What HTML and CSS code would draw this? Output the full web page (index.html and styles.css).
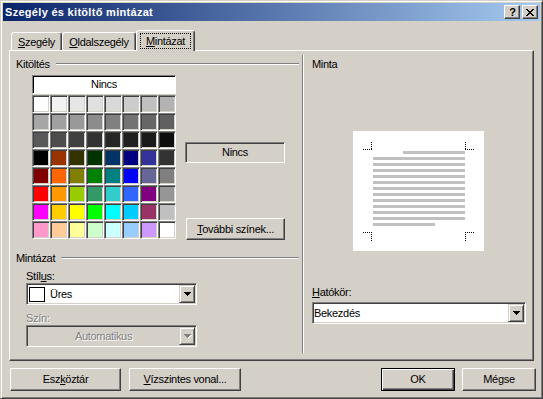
FILE: index.html
```html
<!DOCTYPE html>
<html lang="hu">
<head>
<meta charset="utf-8">
<title>Szegély és kitöltő mintázat</title>
<link rel="stylesheet" href="styles.css">
</head>
<body>
<div class="window">
  <div class="titlebar">
    <span class="title">Szegély és kitöltő mintázat</span>
    <div class="caption-btns">
      <span class="cbtn help">?</span>
      <span class="cbtn close"><svg width="8" height="7" viewBox="0 0 8 7" shape-rendering="crispEdges"><path d="M0 0h2v1H0zM6 0h2v1H6zM1 1h2v1H1zM5 1h2v1H5zM2 2h4v1H2zM3 3h2v1H3zM2 4h4v1H2zM1 5h2v1H1zM5 5h2v1H5zM0 6h2v1H0zM6 6h2v1H6z"/></svg></span>
    </div>
  </div>

  <div class="tabs">
    <div class="tab t1"><u>S</u>zegély</div>
    <div class="tab t2"><u>O</u>ldalszegély</div>
    <div class="tab active"><span class="focus"><u>M</u>intázat</span></div>
  </div>

  <div class="panel">
    <div class="col-left">
      <div class="group-head"><span>Kitöltés</span><i class="etch"></i></div>
      <div class="fill-row">
        <div class="palette">
          <div class="none-cell">Nincs</div>
          <div class="swatches">
            <div class="sw" style="background:#ffffff"></div><div class="sw" style="background:#f2f2f2"></div><div class="sw" style="background:#e6e6e6"></div><div class="sw" style="background:#e0e0e0"></div><div class="sw" style="background:#d9d9d9"></div><div class="sw" style="background:#cccccc"></div><div class="sw" style="background:#c0c0c0"></div><div class="sw" style="background:#b3b3b3"></div>
            <div class="sw" style="background:#a6a6a6"></div><div class="sw" style="background:#a0a0a0"></div><div class="sw" style="background:#999999"></div><div class="sw" style="background:#8c8c8c"></div><div class="sw" style="background:#808080"></div><div class="sw" style="background:#737373"></div><div class="sw" style="background:#666666"></div><div class="sw" style="background:#606060"></div>
            <div class="sw" style="background:#595959"></div><div class="sw" style="background:#4d4d4d"></div><div class="sw" style="background:#404040"></div><div class="sw" style="background:#333333"></div><div class="sw" style="background:#262626"></div><div class="sw" style="background:#202020"></div><div class="sw" style="background:#1a1a1a"></div><div class="sw" style="background:#0d0d0d"></div>
            <div class="sw" style="background:#000000"></div><div class="sw" style="background:#993300"></div><div class="sw" style="background:#333300"></div><div class="sw" style="background:#003300"></div><div class="sw" style="background:#003366"></div><div class="sw" style="background:#000080"></div><div class="sw" style="background:#333399"></div><div class="sw" style="background:#333333"></div>
            <div class="sw" style="background:#800000"></div><div class="sw" style="background:#ff6600"></div><div class="sw" style="background:#808000"></div><div class="sw" style="background:#008000"></div><div class="sw" style="background:#008080"></div><div class="sw" style="background:#0000ff"></div><div class="sw" style="background:#666699"></div><div class="sw" style="background:#808080"></div>
            <div class="sw" style="background:#ff0000"></div><div class="sw" style="background:#ff9900"></div><div class="sw" style="background:#99cc00"></div><div class="sw" style="background:#339966"></div><div class="sw" style="background:#33cccc"></div><div class="sw" style="background:#3366ff"></div><div class="sw" style="background:#800080"></div><div class="sw" style="background:#969696"></div>
            <div class="sw" style="background:#ff00ff"></div><div class="sw" style="background:#ffcc00"></div><div class="sw" style="background:#ffff00"></div><div class="sw" style="background:#00ff00"></div><div class="sw" style="background:#00ffff"></div><div class="sw" style="background:#00ccff"></div><div class="sw" style="background:#993366"></div><div class="sw" style="background:#c0c0c0"></div>
            <div class="sw" style="background:#ff99cc"></div><div class="sw" style="background:#ffcc99"></div><div class="sw" style="background:#ffff99"></div><div class="sw" style="background:#ccffcc"></div><div class="sw" style="background:#ccffff"></div><div class="sw" style="background:#99ccff"></div><div class="sw" style="background:#cc99ff"></div><div class="sw" style="background:#ffffff"></div>
          </div>
        </div>
        <div class="side">
          <div class="current">Nincs</div>
          <div class="btn more"><span><u>T</u>ovábbi színek...</span></div>
        </div>
      </div>

      <div class="group-head g2"><span>Mintázat</span><i class="etch"></i></div>
      <div class="label l-stilus">Stíl<u>u</u>s:</div>
      <div class="combo narrow">
        <span class="pat-swatch"></span>
        <span class="combo-text">Üres</span>
        <span class="drop"><svg width="7" height="4" viewBox="0 0 7 4" shape-rendering="crispEdges"><path d="M0 0h7v1H0zM1 1h5v1H1zM2 2h3v1H2zM3 3h1v1H3z"/></svg></span>
      </div>
      <div class="label l-szin disabled-text">Szín:</div>
      <div class="combo narrow disabled">
        <span class="combo-text centered disabled-text">Automatikus</span>
        <span class="drop"><svg class="dis-arrow" width="7" height="4" viewBox="0 0 7 4" shape-rendering="crispEdges"><path d="M0 0h7v1H0zM1 1h5v1H1zM2 2h3v1H2zM3 3h1v1H3z"/></svg></span>
      </div>
    </div>

    <div class="vsep"></div>

    <div class="col-right">
      <div class="section-label">Minta</div>
      <div class="preview">
        <svg width="131" height="120" viewBox="0 0 131 120" shape-rendering="crispEdges">
          <g fill="#c0c0c0">
            <rect x="50" y="20" width="62" height="3"/>
            <rect x="20" y="26" width="92" height="3"/>
            <rect x="20" y="32" width="92" height="3"/>
            <rect x="20" y="38" width="92" height="3"/>
            <rect x="20" y="44" width="92" height="3"/>
            <rect x="20" y="50" width="92" height="3"/>
            <rect x="20" y="56" width="92" height="3"/>
            <rect x="20" y="62" width="92" height="3"/>
            <rect x="20" y="68" width="92" height="3"/>
            <rect x="20" y="74" width="92" height="3"/>
            <rect x="20" y="80" width="92" height="3"/>
            <rect x="20" y="86" width="92" height="3"/>
            <rect x="20" y="92" width="62" height="3"/>
          </g>
          <g stroke="#000" stroke-width="1" stroke-dasharray="1 1" fill="none">
            <path d="M10 18.5H19"/><path d="M18.5 11V19"/>
            <path d="M112.5 11V19"/><path d="M112 18.5H122"/>
            <path d="M10 101.5H19"/><path d="M18.5 101V110"/>
            <path d="M112.5 101V110"/><path d="M112 101.5H122"/>
          </g>
        </svg>
      </div>
      <div class="label l-hat"><u>H</u>atókör:</div>
      <div class="combo wide">
        <span class="combo-text flush">Bekezdés</span>
        <span class="drop"><svg width="7" height="4" viewBox="0 0 7 4" shape-rendering="crispEdges"><path d="M0 0h7v1H0zM1 1h5v1H1zM2 2h3v1H2zM3 3h1v1H3z"/></svg></span>
      </div>
    </div>
  </div>

  <div class="buttons">
    <div class="btn b-esz"><span>Esz<u>k</u>öztár</span></div>
    <div class="btn b-viz"><span><u>V</u>ízszintes vonal...</span></div>
    <div class="btn b-ok"><span>OK</span></div>
    <div class="btn b-megse"><span>Mégse</span></div>
  </div>
</div>
</body>
</html>
```

FILE: styles.css
```css
* { box-sizing: border-box; margin: 0; padding: 0; }
html, body { width: 543px; height: 399px; overflow: hidden; }
body {
  background: #d4d0c8;
  font-family: "Liberation Sans", Arial, sans-serif;
  font-size: 11px;
  line-height: 13px;
  color: #000;
  letter-spacing: -0.3px;
}
u { text-decoration: underline; text-underline-offset: 1px; }
svg { display: block; }

.window {
  width: 543px;
  height: 399px;
  border: 1px solid;
  border-color: #d4d0c8 #404040 #404040 #d4d0c8;
  box-shadow: inset 1px 1px #fff, inset -1px -1px #808080;
  padding: 2px;
  display: flex;
  flex-direction: column;
}

/* title bar */
.titlebar {
  flex: none;
  height: 18px;
  display: flex;
  align-items: center;
  padding: 0 2px;
  background: linear-gradient(to right, #0a246a, #a6caf0);
}
.title {
  color: #fff;
  font-weight: bold;
  font-size: 11px;
  letter-spacing: 0.3px;
  line-height: 18px;
}
.caption-btns { margin-left: auto; display: flex; gap: 2px; }
.cbtn {
  width: 16px;
  height: 14px;
  background: #d4d0c8;
  border: 1px solid;
  border-color: #fff #404040 #404040 #fff;
  box-shadow: inset -1px -1px #808080;
  display: flex;
  align-items: center;
  justify-content: center;
}
.help { font-weight: bold; font-size: 11px; line-height: 12px; letter-spacing: 0; padding-left: 1px; }

/* tabs */
.tabs {
  flex: none;
  display: flex;
  align-items: flex-end;
  height: 20px;
  margin: 9px 0 0 8px;
  position: relative;
  z-index: 1;
}
.tab {
  height: 18px;
  border: 1px solid;
  border-bottom: 0;
  border-color: #fff #404040 transparent #fff;
  border-radius: 3px 3px 0 0;
  box-shadow: inset -1px 0 #808080;
  background: #d4d0c8;
  text-align: center;
  padding-top: 3px;
}
.t1 { width: 51px; }
.t2 { width: 74px; }
.tab.active {
  width: 59px;
  height: 21px;
  margin-bottom: -1px;
  padding-top: 2px;
  display: flex;
  justify-content: center;
  align-items: flex-start;
}
.focus {
  border: 1px dotted #000;
  padding: 0 5px;
  line-height: 14px;
  height: 16px;
}

/* tab page */
.panel {
  flex: none;
  margin-left: 6px;
  width: 525px;
  height: 311px;
  border: 1px solid;
  border-color: #fff #404040 #404040 #fff;
  box-shadow: inset -1px -1px #808080;
  display: flex;
}
.col-left { width: 292px; flex: none; }
.col-right { flex: 1; }
.vsep {
  flex: none;
  width: 2px;
  border-left: 1px solid #808080;
  border-right: 1px solid #fff;
  margin: 4px 0 7px;
}

.group-head {
  display: flex;
  align-items: center;
  height: 14px;
  line-height: 14px;
  padding-left: 6px;
  margin-top: 6px;
}
.group-head.g2 { margin-top: 11px; }
.etch {
  flex: 1;
  height: 2px;
  border-top: 1px solid #808080;
  border-bottom: 1px solid #fff;
  margin: 0 3px 0 6px;
}

.fill-row { display: flex; margin: 4px 0 0 22px; }
.palette { width: 144px; flex: none; }
.none-cell {
  height: 19px;
  margin-bottom: 1px;
  background: #fff;
  border: 1px solid;
  border-color: #808080 #fff #fff #808080;
  box-shadow: inset 1px 1px #000;
  text-align: center;
  line-height: 17px;
}
.swatches {
  display: grid;
  grid-template-columns: repeat(8, 18px);
  grid-auto-rows: 18px;
}
.sw {
  border: 1px solid;
  border-color: #808080 #fff #fff #808080;
  box-shadow: inset 1px 1px #404040, inset -1px -1px #d4d0c8;
}

.side { margin-left: 9px; width: 100px; display: flex; flex-direction: column; }
.current {
  margin-top: 67px;
  height: 21px;
  border: 1px solid;
  border-color: #808080 #fff #fff #808080;
  box-shadow: inset 1px 1px #404040;
  text-align: center;
  line-height: 19px;
}
.more { margin: 55px 0 0 1px; height: 22px; }

.label { height: 13px; padding-left: 16px; }
.l-stilus { margin-top: 5px; }
.l-szin { margin-top: 7px; }
.l-hat { margin-top: 35px; padding-left: 8px; }
.disabled-text { color: #808080; text-shadow: 1px 1px 0 #fff; }

.section-label { margin-top: 6px; height: 14px; line-height: 14px; padding-left: 8px; }
.preview { width: 131px; height: 120px; background: #fff; margin: 60px auto 0; }

/* combos */
.combo {
  display: flex;
  align-items: center;
  height: 22px;
  background: #fff;
  border: 1px solid;
  border-color: #808080 #fff #fff #808080;
  box-shadow: inset 1px 1px #404040, inset -1px -1px #d4d0c8;
  padding: 1px;
}
.combo.narrow { margin-left: 16px; width: 171px; }
.combo.wide { margin: 3px 0 0 8px; width: 214px; }
.combo.disabled { background: #d4d0c8; }
.pat-swatch {
  align-self: flex-start;
  margin: 2px 0 0 1px;
  width: 16px;
  height: 15px;
  border: 1px solid #000;
  background: #fff;
  flex: none;
}
.combo-text { margin-left: 5px; }
.combo-text.flush { margin-left: 0; }
.combo-text.centered { flex: 1; margin-left: 0; text-align: center; }
.drop {
  margin-left: auto;
  flex: none;
  width: 16px;
  height: 18px;
  background: #d4d0c8;
  border: 1px solid;
  border-color: #d4d0c8 #404040 #404040 #d4d0c8;
  box-shadow: inset 1px 1px #fff, inset -1px -1px #808080;
  display: flex;
  align-items: center;
  justify-content: center;
}
.dis-arrow { fill: #808080; filter: drop-shadow(1px 1px 0 #fff); }

/* buttons */
.btn {
  background: #d4d0c8;
  border: 1px solid;
  border-color: #fff #404040 #404040 #fff;
  box-shadow: inset -1px -1px #808080;
  display: flex;
  align-items: center;
  justify-content: center;
}
.buttons {
  flex: none;
  display: flex;
  height: 23px;
  margin-top: 7px;
  padding: 0 4px 0 7px;
}
.b-esz { width: 111px; }
.b-viz { width: 112px; margin-left: 8px; }
.b-ok {
  width: 74px;
  margin-left: auto;
  border-color: #000;
  box-shadow: inset 1px 1px #fff, inset -1px -1px #404040, inset -2px -2px #808080;
}
.b-megse { width: 74px; margin-left: 7px; }
```
